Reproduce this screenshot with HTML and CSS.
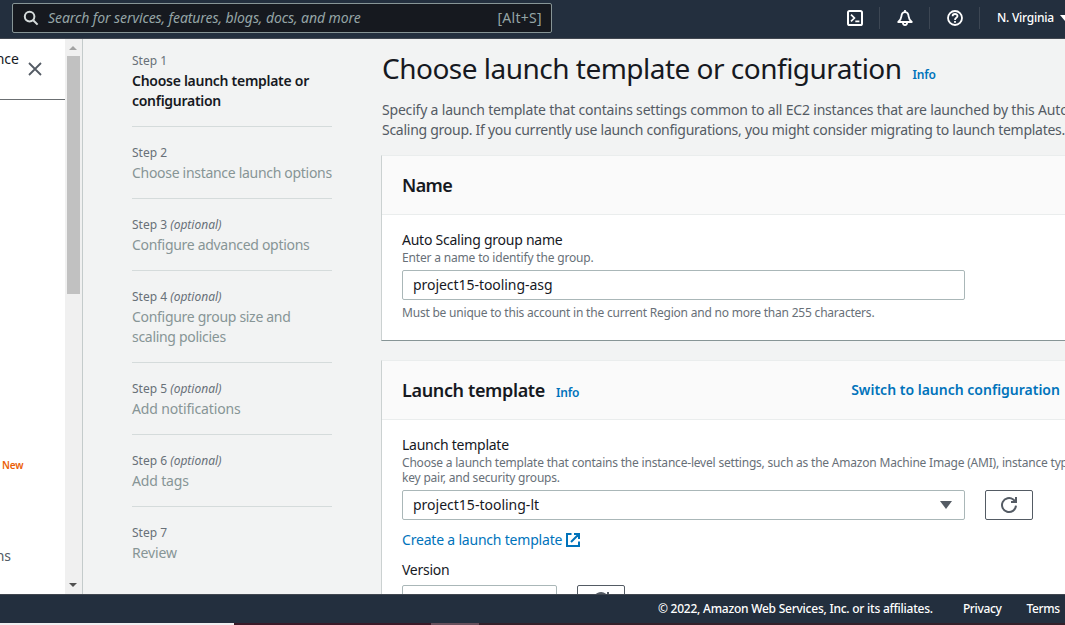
FILE: index.html
```
<!DOCTYPE html>
<html lang="en">
<head>
<meta charset="utf-8">
<title>Create Auto Scaling group</title>
<link rel="stylesheet" href="styles.css">
</head>
<body>
<div class="app">
  <header class="topbar">
    <div class="search">
      <svg class="search-icon" width="16" height="16" viewBox="0 0 16 16" fill="none" stroke="#d5dbdb" stroke-width="2"><circle cx="6.6" cy="6.6" r="4.8"/><path d="M10.2 10.2 14.6 14.6"/></svg>
      <span class="search-text">Search for services, features, blogs, docs, and more</span>
      <span class="search-key">[Alt+S]</span>
    </div>
    <nav class="tools">
      <span class="tool"><svg width="16" height="16" viewBox="0 0 16 16" fill="none" stroke="#fff" stroke-width="2"><rect x="1" y="1" width="14" height="14" rx="1.6"/><path d="M4 4.6 7.4 8 4 11.4M8.3 11.3H12.4" stroke-width="1.7"/></svg></span>
      <span class="tool"><svg width="16" height="16" viewBox="0 0 16 16" fill="none" stroke="#fff" stroke-width="1.8"><path d="M1.200 12C3.200 10.400 4.200 8.600 4.400 6.400C4.600 4 6 2.200 8 2.200S11.400 4 11.600 6.400C11.800 8.600 12.800 10.400 14.800 12Z" stroke-linejoin="round"/><path d="M8 0V2.300M5.900 12.500C5.900 15.900 10.100 15.900 10.100 12.500"/></svg></span>
      <span class="tool"><svg width="16" height="16" viewBox="0 0 16 16" fill="none" stroke="#fff" stroke-width="1.8"><circle cx="8" cy="8" r="7"/><path d="M5.600 6.300C5.600 3.200 10.500 3.300 10.500 6.100C10.500 7.900 8 7.700 8 9.900M8 11V12.700"/></svg></span>
      <span class="region"><span>N. Virginia</span><i class="caret"></i></span>
    </nav>
  </header>

  <main class="main">
    <aside class="sidenav">
      <div class="sidenav-head">
        <span class="clip-label">nce</span>
        <svg class="close" width="14" height="14" viewBox="0 0 14 14" stroke="#545b64" stroke-width="1.8"><path d="M1 1 13 13M13 1 1 13"/></svg>
      </div>
      <div class="sidenav-body">
        <span class="new">New</span>
        <span class="clip-item">ns</span>
      </div>
    </aside>
    <div class="scrollbar">
      <i class="up"></i>
      <div class="thumb"></div>
      <i class="down"></i>
    </div>

    <ol class="steps">
      <li class="step current"><small>Step 1</small><b>Choose launch template or<br>configuration</b></li>
      <li class="step"><small>Step 2</small><span>Choose instance launch options</span></li>
      <li class="step"><small>Step 3 <em>(optional)</em></small><span>Configure advanced options</span></li>
      <li class="step"><small>Step 4 <em>(optional)</em></small><span>Configure group size and<br>scaling policies</span></li>
      <li class="step short"><small>Step 5 <em>(optional)</em></small><span>Add notifications</span></li>
      <li class="step short"><small>Step 6 <em>(optional)</em></small><span>Add tags</span></li>
      <li class="step short"><small>Step 7</small><span>Review</span></li>
    </ol>

    <section class="content">
      <div class="title-row"><h1>Choose launch template or configuration</h1><a class="info">Info</a></div>
      <p class="intro"><span class="intro-a">Specify a launch template that contains settings common to all EC2 instances that are launched by this Auto</span><br><span class="intro-b">Scaling group. If you currently use launch configurations, you might consider migrating to launch templates.</span></p>

      <div class="card">
        <div class="card-head"><h2 class="h-name">Name</h2></div>
        <div class="card-body name-body">
          <label class="label l-asg">Auto Scaling group name</label>
          <p class="hint h-enter">Enter a name to identify the group.</p>
          <div class="input"><span class="v-asg">project15-tooling-asg</span></div>
          <p class="hint constraint">Must be unique to this account in the current Region and no more than 255 characters.</p>
        </div>
      </div>

      <div class="card">
        <div class="card-head"><h2 class="h-lt">Launch template</h2><a class="info">Info</a><a class="switch">Switch to launch configuration</a></div>
        <div class="card-body">
          <label class="label l-lt">Launch template</label>
          <p class="hint hint-two"><span class="h-choose">Choose a launch template that contains the instance-level settings, such as the Amazon Machine Image (AMI), instance type,</span><br><span class="h-key">key pair, and security groups.</span></p>
          <div class="field-row">
            <div class="input select"><span class="v-lt">project15-tooling-lt</span><i class="select-caret"></i></div>
            <button class="refresh"><svg width="18" height="18" viewBox="0 0 18 18" fill="none" stroke="#545b64" stroke-width="2"><path d="M16 9.700A7 7 0 1 1 13.300 3.500L15.500 5.500M16 1V6H11"/></svg></button>
          </div>
          <a class="create"><span>Create a launch template</span><svg width="14" height="14" viewBox="0 0 14 14" fill="none" stroke="#0073bb" stroke-width="2"><path d="M5.500 1H1V13H13V8.500M8 1H13V6M13 1 5 9"/></svg></a>
          <label class="label l-version">Version</label>
          <div class="field-row">
            <div class="input version"></div>
            <button class="refresh"><svg width="18" height="18" viewBox="0 0 18 18" fill="none" stroke="#545b64" stroke-width="2"><path d="M16 9.700A7 7 0 1 1 13.300 3.500L15.500 5.500M16 1V6H11"/></svg></button>
          </div>
        </div>
      </div>
    </section>
  </main>

  <footer class="footer">
    <span class="copy">© 2022, Amazon Web Services, Inc. or its affiliates.</span>
    <span class="privacy">Privacy</span>
    <span class="terms">Terms</span>
  </footer>
  <div class="taskbar"><i class="tb-light"></i><i class="tb-dark"></i><i class="tb-active"></i><i class="tb-rest"></i></div>
</div>
</body>
</html>
```
FILE: styles.css
```
* { box-sizing: border-box; margin: 0; padding: 0; }
body { font-family: "Noto Sans", sans-serif; font-size: 14px; line-height: 20px; color: #16191f; overflow: hidden; }
span, a, label, h1, h2, b { white-space: nowrap; }
.app { width: 1065px; height: 625px; display: flex; flex-direction: column; overflow: hidden; background: #f2f3f3; }

.topbar { flex: none; height: 39px; background: #232f3e; border-bottom: 1px solid #414750; display: flex; justify-content: space-between; padding: 3px 0 0 12px; }
.search { width: 540px; height: 30px; background: #16191f; border: 1px solid #879596; border-radius: 2px; display: flex; align-items: center; padding: 0 9px 0 10px; color: #95a5a6; }
.search-icon { margin-right: 9px; }
.search-text { font-style: italic; flex: 1; letter-spacing: -0.08px; }
.search-key { letter-spacing: 0.3px; }
.tools { display: flex; height: 30px; align-items: center; }
.tool { width: 50px; height: 22px; display: flex; align-items: center; justify-content: center; border-right: 1px solid #3c4653; }
.region { width: 85px; padding-left: 17px; font-size: 12px; font-weight: 500; letter-spacing: -0.25px; color: #fff; display: flex; align-items: center; overflow: hidden; }
.caret { flex: none; margin-left: 6px; border: 5px solid transparent; border-top: 6px solid #fff; border-bottom: 0; }

.main { flex: none; height: 555px; display: flex; overflow: hidden; }
.sidenav { width: 65px; background: #fff; flex: none; }
.sidenav-head { height: 61px; border-bottom: 1px solid #6b6f72; display: flex; padding-top: 10px; }
.clip-label { width: 19px; display: flex; justify-content: flex-end; overflow: hidden; }
.close { margin: 13px 0 0 9px; }
.sidenav-body { display: flex; flex-direction: column; padding-top: 355px; }
.new { font-size: 10px; font-weight: 600; letter-spacing: -0.2px; color: #eb5f07; padding-left: 2px; }
.clip-item { width: 11px; margin-top: 71px; color: #545b64; display: flex; justify-content: flex-end; overflow: hidden; }
.scrollbar { flex: none; width: 18px; background: #f0f0f0; border-right: 1px solid #c4cbcb; display: flex; flex-direction: column; align-items: center; }
.up { margin: 7px 1px 6px 0; border: 4px solid transparent; border-bottom-color: #a3a3a3; border-top: 0; }
.thumb { width: 13px; height: 238px; background: #c1c1c1; }
.down { margin: auto 1px 7px 0; border: 4px solid transparent; border-top-color: #505050; border-bottom: 0; }

.steps { list-style: none; width: 200px; margin: 12px 49px 0; flex: none; }
.step { display: flex; flex-direction: column; padding-bottom: 15px; margin-bottom: 16px; border-bottom: 1px solid #d5dbdb; color: #879596; }
.step:last-child { border: 0; }
.step small { font-size: 12px; color: #687078; }
.step b { font-weight: 600; color: #16191f; letter-spacing: -0.28px; }
.step span { letter-spacing: -0.3px; }
.short span { letter-spacing: -0.15px; }

.content { width: 800px; flex: none; padding-top: 10px; }
.title-row { display: flex; align-items: baseline; height: 51px; padding-left: 1px; }
h1 { font-size: 28px; line-height: 38px; font-weight: 400; letter-spacing: -0.51px; }
.info { font-size: 12px; font-weight: 600; letter-spacing: -0.2px; color: #0073bb; margin-left: 11px; }
.intro { color: #545b64; padding-left: 1px; }
.intro-a { letter-spacing: -0.19px; }
.intro-b { letter-spacing: -0.27px; }
.card { background: #fff; border: 1px solid #eaeded; border-left-color: #cbd1d1; border-bottom-color: #879596; margin-top: 15px; }
.card + .card { margin-top: 19px; }
.card-head { height: 59px; background: #fafafa; border-bottom: 1px solid #eaeded; display: flex; align-items: baseline; padding: 17px 20px 0; }
h2 { font-size: 18px; line-height: 24px; font-weight: 600; }
.h-name { letter-spacing: -0.6px; }
.h-lt { letter-spacing: -0.36px; }
.switch { font-weight: 600; color: #0073bb; margin-left: 272px; align-self: flex-start; line-height: 24px; }
.card-body { padding: 15px 20px 20px; display: flex; flex-direction: column; }
.label { letter-spacing: -0.25px; }
.hint { font-size: 12px; line-height: 15px; color: #687078; letter-spacing: -0.2px; }
.input { flex: none; width: 563px; height: 30px; border: 1px solid #aab7b8; border-radius: 2px; padding-left: 10px; display: flex; align-items: center; background: #fff; }
.h-enter { padding-bottom: 5px; letter-spacing: -0.17px; }
.constraint { padding-top: 5px; letter-spacing: -0.21px; }
.v-asg { letter-spacing: -0.05px; }
.name-body { height: 125px; }
.hint-two { height: 35px; }
.field-row { display: flex; gap: 20px; }
.select { justify-content: space-between; padding-right: 12px; }
.select-caret { border: 6px solid transparent; border-top: 8px solid #545b64; border-bottom: 0; }
.refresh { width: 48px; height: 30px; border: 1px solid #545b64; border-radius: 2px; background: #fff; display: flex; align-items: center; justify-content: center; }
.create { color: #0073bb; margin: 10px 0; display: flex; align-items: center; gap: 4px; letter-spacing: -0.2px; }
.l-version { margin-bottom: 5px; }
.version { width: 155px; }

.footer { flex: none; height: 29px; background: #232f3e; border-top: 1px solid #414750; color: #fff; font-size: 12px; font-weight: 500; letter-spacing: -0.24px; display: flex; align-items: center; padding-left: 658px; }
.privacy { margin-left: 30px; letter-spacing: -0.35px; }
.terms { margin-left: 25px; letter-spacing: -0.35px; }
.taskbar { height: 2px; display: flex; }
.tb-light { width: 234px; background: #f0eef0; }
.tb-dark { width: 197px; background: #3a1a28; }
.tb-active { width: 48px; background: #67505c; }
.tb-rest { flex: 1; background: #33202a; }
```
